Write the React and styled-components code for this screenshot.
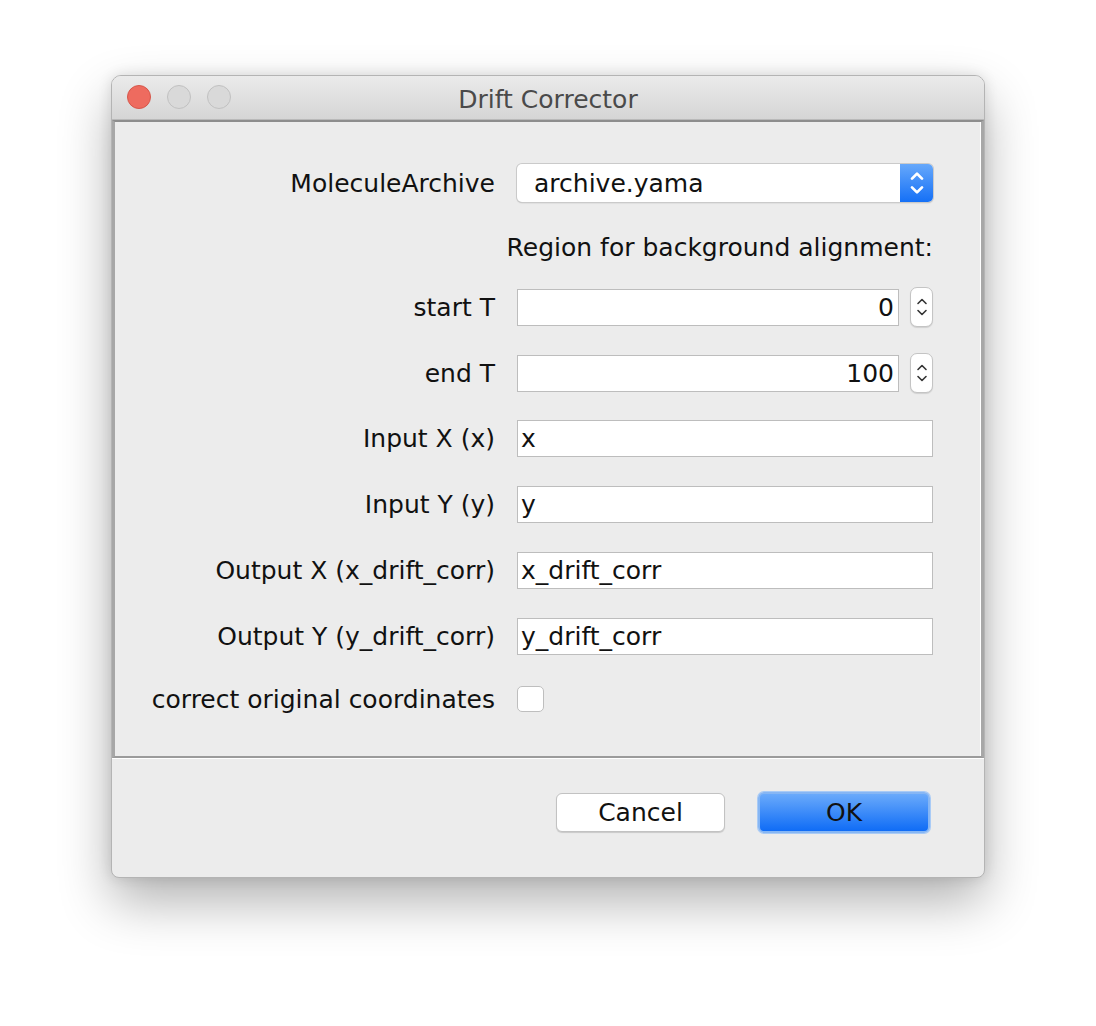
import React from "react";
import styled, { createGlobalStyle } from "styled-components";

const GlobalStyle = createGlobalStyle`
  html, body {
    margin: 0;
    padding: 0;
    background: #ffffff;
  }
  body {
    font-family: "DejaVu Sans", "Liberation Sans", sans-serif;
    color: #111;
  }
`;

const Page = styled.div`
  padding: 75px 0 0 111px;
  height: 1026px;
  box-sizing: border-box;
`;

const Window = styled.div`
  width: 874px;
  height: 803px;
  box-sizing: border-box;
  display: flex;
  flex-direction: column;
  background: #ececec;
  border: 1px solid #b4b4b4;
  border-radius: 10px 10px 8px 8px;
  overflow: hidden;
  box-shadow: 0 24px 52px rgba(0, 0, 0, 0.3), 0 0 14px rgba(0, 0, 0, 0.12);
`;

const TitleBar = styled.div`
  position: relative;
  height: 43px;
  flex-shrink: 0;
  display: flex;
  align-items: center;
  justify-content: center;
  background: linear-gradient(#ebebeb, #d5d5d5);
  border-bottom: 1px solid #b9b9b9;
`;

const Lights = styled.div`
  position: absolute;
  left: 15px;
  top: 9px;
  display: flex;
  gap: 16px;
`;

const Light = styled.span`
  width: 24px;
  height: 24px;
  border-radius: 50%;
  box-sizing: border-box;
  background: ${(p) => (p.$red ? "#ee6b5f" : "#d9d9d9")};
  border: 1px solid ${(p) => (p.$red ? "#d5574b" : "#c0c0c0")};
`;

const Title = styled.div`
  font-size: 25px;
  color: #4a4a4a;
  padding-top: 4px;
`;

const Panel = styled.div`
  height: 638px;
  box-sizing: border-box;
  border-top: 2px solid #8d8d8d;
  border-left: 3px solid #a7a7a7;
  border-right: 3px solid #a7a7a7;
  border-bottom: 2px solid #9b9b9b;
  box-shadow: inset -1px 0 #ffffff;
  padding-top: 42px;
  display: flex;
  flex-direction: column;
`;

const Row = styled.div`
  display: grid;
  grid-template-columns: 380px 416px;
  column-gap: 22px;
  align-items: center;
  height: 38px;
  margin-top: ${(p) => p.$gap || 0}px;
`;

const Label = styled.div`
  text-align: right;
  font-size: 25px;
  white-space: nowrap;
`;

const Note = styled.div`
  grid-column: 1 / 3;
  text-align: right;
  font-size: 25px;
`;

const Combo = styled.div`
  height: 38px;
  display: flex;
  border-radius: 5px;
  background: #fff;
  box-shadow: 0 0 0 1px #cacaca, 0 1px 1.5px rgba(0, 0, 0, 0.25);
  overflow: hidden;
`;

const ComboText = styled.div`
  flex: 1;
  display: flex;
  align-items: center;
  padding-left: 17px;
  font-size: 25px;
`;

const ComboArrows = styled.div`
  width: 33px;
  display: flex;
  align-items: center;
  justify-content: center;
  background: linear-gradient(#66a8fb, #1570f6);
`;

const SpinRow = styled.div`
  display: flex;
  align-items: center;
  gap: 11px;
`;

const Field = styled.div`
  flex: 1;
  height: 37px;
  box-sizing: border-box;
  display: flex;
  align-items: center;
  justify-content: ${(p) => (p.$number ? "flex-end" : "flex-start")};
  padding: ${(p) => (p.$number ? "0 4px 0 0" : "0 0 0 3px")};
  background: #fff;
  border: 1px solid #bdbdbd;
  font-size: 25px;
`;

const SpinButton = styled.div`
  width: 23px;
  height: 40px;
  box-sizing: border-box;
  display: flex;
  align-items: center;
  justify-content: center;
  background: #fff;
  border: 1px solid #c4c4c4;
  border-radius: 7px;
  box-shadow: 0 1px 1px rgba(0, 0, 0, 0.12);
`;

const Check = styled.div`
  width: 27px;
  height: 26px;
  box-sizing: border-box;
  background: #fff;
  border: 1px solid #bebebe;
  border-radius: 5px;
`;

const Footer = styled.div`
  flex: 1;
  border-top: 1px solid #ffffff;
  display: flex;
  justify-content: flex-end;
  align-items: center;
  gap: 33px;
  padding: 0 54px 11px 0;
`;

const Button = styled.div`
  width: ${(p) => (p.$primary ? "172px" : "169px")};
  height: ${(p) => (p.$primary ? "41px" : "39px")};
  box-sizing: border-box;
  display: flex;
  align-items: center;
  justify-content: center;
  font-size: 25px;
  border-radius: 6px;
  background: ${(p) =>
    p.$primary ? "linear-gradient(#6aaafb, #0f6cf6)" : "#ffffff"};
  border: ${(p) => (p.$primary ? "2px solid #86b6f4" : "1px solid #c2c2c2")};
  box-shadow: ${(p) =>
    p.$primary ? "0 0 0 1px #a9cbf6" : "0 1px 1px rgba(0,0,0,0.15)"};
`;

// up/down chevron pair, used by the combo box and the spinners
const UpDown = ({ color, stroke, w = 14, h = 24 }) => (
  <svg width={w} height={h} viewBox="0 0 14 24" fill="none">
    <path
      d="M3 8.5 L7 4.5 L11 8.5"
      stroke={color}
      strokeWidth={stroke}
      strokeLinecap="round"
      strokeLinejoin="round"
    />
    <path
      d="M3 15.5 L7 19.5 L11 15.5"
      stroke={color}
      strokeWidth={stroke}
      strokeLinecap="round"
      strokeLinejoin="round"
    />
  </svg>
);

const textRows = [
  ["Input X (x)", "x"],
  ["Input Y (y)", "y"],
  ["Output X (x_drift_corr)", "x_drift_corr"],
  ["Output Y (y_drift_corr)", "y_drift_corr"],
];

export default function App() {
  return (
    <>
      <GlobalStyle />
      <Page>
        <Window>
          <TitleBar>
            <Lights>
              <Light $red />
              <Light />
              <Light />
            </Lights>
            <Title>Drift Corrector</Title>
          </TitleBar>
          <Panel>
            <Row>
              <Label>MoleculeArchive</Label>
              <Combo>
                <ComboText>archive.yama</ComboText>
                <ComboArrows>
                  <UpDown color="#fff" stroke={2.2} w={18} h={30} />
                </ComboArrows>
              </Combo>
            </Row>

            <Row $gap={26}>
              <Note>Region for background alignment:</Note>
            </Row>

            <Row $gap={21}>
              <Label>start T</Label>
              <SpinRow>
                <Field $number>0</Field>
                <SpinButton>
                  <UpDown color="#333" stroke={1.6} />
                </SpinButton>
              </SpinRow>
            </Row>

            <Row $gap={28}>
              <Label>end T</Label>
              <SpinRow>
                <Field $number>100</Field>
                <SpinButton>
                  <UpDown color="#333" stroke={1.6} />
                </SpinButton>
              </SpinRow>
            </Row>

            {textRows.map(([label, value]) => (
              <Row $gap={28} key={label}>
                <Label>{label}</Label>
                <Field>{value}</Field>
              </Row>
            ))}

            <Row $gap={25}>
              <Label>correct original coordinates</Label>
              <Check />
            </Row>
          </Panel>
          <Footer>
            <Button>Cancel</Button>
            <Button $primary>OK</Button>
          </Footer>
        </Window>
      </Page>
    </>
  );
}
